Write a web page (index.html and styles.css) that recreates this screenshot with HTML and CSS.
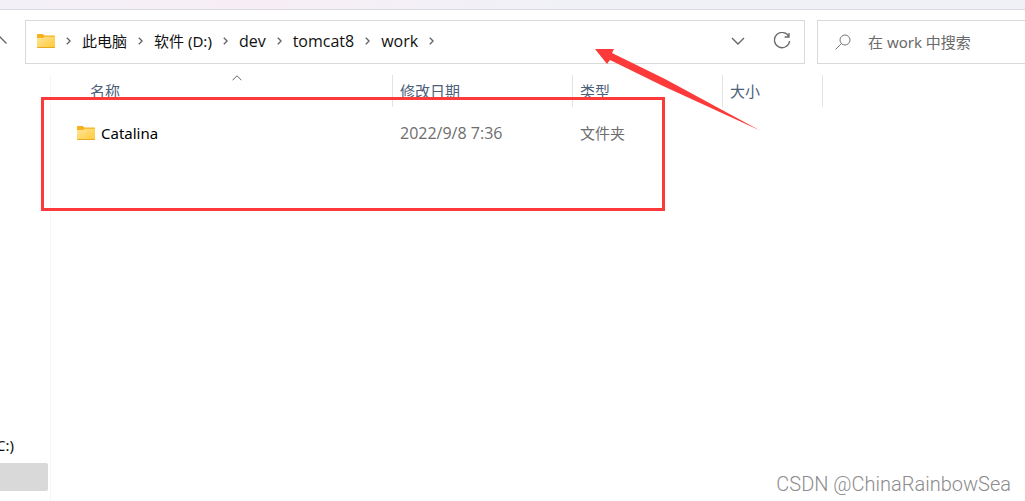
FILE: index.html
```
<!DOCTYPE html>
<html lang="zh-CN">
<head>
    <meta charset="UTF-8">
    <title>work</title>
    <link rel="stylesheet" href="styles.css">
</head>
<body>
<!-- shared icons -->
<svg class="defs" aria-hidden="true">
    <defs>
        <linearGradient id="folderFill" x1="0" y1="0" x2="1" y2="1">
            <stop offset="0" stop-color="#ffe69a"/>
            <stop offset="1" stop-color="#ffc937"/>
        </linearGradient>
    </defs>
    <symbol id="folder" viewBox="0 0 18 15">
        <path d="M0 .7Q0 0 .7 0H5.7L7.5 1.5H17.3Q18 1.5 18 2.2V8H0Z" fill="#f5b21d"/>
        <path d="M0 4H6L7.6 2.7H18V13.3Q18 14 17.3 14H.7Q0 14 0 13.3Z" fill="url(#folderFill)"/>
        <path d="M.3 13.5H17.7" stroke="#e8a820" fill="none"/>
    </symbol>
    <symbol id="chevron" viewBox="0 0 5 8">
        <path d="M.8.7L4.1 4L.8 7.3" fill="none" stroke="#666" stroke-width="1.4"/>
    </symbol>
</svg>

<div class="tabstrip"></div>

<header class="toolbar">
    <button class="up" aria-label="上移">
        <svg width="14" height="8" viewBox="0 0 14 8"><path d="M1 7L7 1L13.5 7.5" fill="none" stroke="#666" stroke-width="1.3"/></svg>
    </button>
    <div class="address">
        <nav class="crumbs">
            <svg class="folder"><use href="#folder"/></svg>
            <svg class="chevron"><use href="#chevron"/></svg>
            <a href="#">此电脑</a>
            <svg class="chevron"><use href="#chevron"/></svg>
            <a href="#">软件 (D:)</a>
            <svg class="chevron"><use href="#chevron"/></svg>
            <a class="latin" href="#">dev</a>
            <svg class="chevron"><use href="#chevron"/></svg>
            <a class="latin" href="#">tomcat8</a>
            <svg class="chevron"><use href="#chevron"/></svg>
            <a class="latin" href="#">work</a>
            <svg class="chevron"><use href="#chevron"/></svg>
        </nav>
        <button aria-label="历史记录">
            <svg width="14" height="8" viewBox="0 0 14 8"><path d="M1 1L7 7L13 1" fill="none" stroke="#666" stroke-width="1.4"/></svg>
        </button>
        <button aria-label="刷新">
            <svg width="18" height="18" viewBox="0 0 18 18"><path d="M16 5A7.6 7.6 0 1 0 16.6 9M16 1V5H11.6" fill="none" stroke="#6a6a6a" stroke-width="1.3"/></svg>
        </button>
    </div>
    <label class="search">
        <svg width="16" height="16" viewBox="0 0 16 16"><path d="M6.6 9.4L.6 15.4" stroke="#777"/><circle cx="10" cy="6" r="5" fill="none" stroke="#777"/></svg>
        <input type="search" placeholder="在 work 中搜索" aria-label="在 work 中搜索">
    </label>
</header>

<div class="content">
    <aside class="sidebar">
        <a class="drive" href="#">C:)</a>
        <div class="selected"></div>
    </aside>
    <main>
        <table class="files">
            <thead>
            <tr>
                <th class="name">
                    名称
                    <svg class="sort" width="10" height="6" viewBox="0 0 10 6"><path d="M.5 5.3L5 .8L9.5 5.3" fill="none" stroke="#666"/></svg>
                </th>
                <th class="date">修改日期</th>
                <th class="type">类型</th>
                <th class="size">大小</th>
                <th class="rest"></th>
            </tr>
            </thead>
            <tbody>
            <tr>
                <td class="name">
                    <div class="file"><svg class="folder"><use href="#folder"/></svg>Catalina</div>
                </td>
                <td class="latin">2022/9/8 7:36</td>
                <td>文件夹</td>
                <td></td>
                <td></td>
            </tr>
            </tbody>
        </table>
    </main>
</div>

<!-- annotations over the window -->
<div class="marker"></div>
<svg class="arrow" width="166" height="84" viewBox="0 0 166 84"><path d="M0 1L19 1L17 5L70 31L165 82.5L68 38L15 12L12 16Z" fill="#fc3a3a"/></svg>
<div class="watermark">CSDN @ChinaRainbowSea</div>
</body>
</html>
```

FILE: styles.css
```
* {
    box-sizing: border-box;
}

body {
    display: flex;
    flex-direction: column;
    position: relative;
    min-height: 100vh;
    margin: 0;
    overflow: hidden;
    background: #fff;
    color: #111;
    font: 15px/20px "Noto Sans", "Noto Sans CJK SC", sans-serif;
}

a {
    color: inherit;
    text-decoration: none;
}

button {
    display: flex;
    padding: 0;
    border: none;
    background: none;
}

svg {
    flex: none;
}

.latin {
    font-family: "Open Sans", sans-serif;
    font-size: 16px;
}

.defs {
    position: absolute;
    width: 0;
    height: 0;
}

.tabstrip {
    height: 10px;
    border-bottom: 1px solid #dcdbe2;
    background: linear-gradient(to right, #f3f0f7, #f7eef5 25%, #f0f1f7 55%);
}

.toolbar {
    display: flex;
    gap: 12px;
    padding-top: 10px;
}

.up {
    flex: none;
    align-items: center;
    justify-content: flex-end;
    width: 13px;
    padding: 0 6px 5px 0;
    overflow: hidden;
}

.address,
.search {
    display: flex;
    align-items: center;
    min-width: 0;
    height: 44px;
    border: 1px solid #d9d9d9;
}

.address {
    flex: 1 1 780px;
    gap: 28px;
    padding: 0 13px 2px 11px;
}

.crumbs {
    display: flex;
    flex: 1;
    align-items: center;
    gap: 11px;
    white-space: nowrap;
}

.folder {
    width: 18px;
    height: 15px;
}

.chevron {
    width: 5px;
    height: 8px;
}

.search {
    flex: 0 1 208px;
    gap: 17px;
    padding-left: 17px;
    border-right: none;
}

.search input {
    flex: 1;
    min-width: 0;
    padding: 0;
    border: none;
    outline: none;
    background: none;
    font: inherit;
}

.search input::placeholder {
    color: #6a6a6a;
}

.content {
    display: flex;
    flex: 1;
    padding-top: 11px;
}

.sidebar {
    display: flex;
    flex: none;
    flex-direction: column;
    justify-content: flex-end;
    width: 51px;
    padding: 0 2px 10px 0;
    border-right: 1px solid #f5f5f5;
}

.drive {
    display: flex;
    justify-content: flex-end;
    width: 14px;
    margin-bottom: 8px;
}

.selected {
    height: 28px;
    border-radius: 0 2px 2px 0;
    background: #d9d9d9;
}

main {
    flex: 1;
}

.files {
    width: 100%;
    border-collapse: separate;
    border-spacing: 0;
    table-layout: fixed;
    text-align: left;
}

.files th {
    position: relative;
    height: 32px;
    padding: 0 7px;
    border-right: 1px solid #e3e3e3;
    color: #4c607a;
    font-weight: normal;
}

.files th.name {
    width: 342px;
    padding-left: 39px;
}

.files th.date {
    width: 180px;
}

.files th.type {
    width: 150px;
}

.files th.size {
    width: 100px;
}

.files th.rest {
    border-right: none;
}

.sort {
    position: absolute;
    top: 0;
    left: 181px;
}

.files td {
    height: 52px;
    padding: 0 7px;
    color: #6d6d6d;
}

.files td.name {
    padding-left: 26px;
    color: #000;
}

.file {
    display: flex;
    align-items: center;
    gap: 6px;
}

.marker {
    position: absolute;
    top: 97px;
    left: 41px;
    width: 624px;
    height: 114px;
    border: 3px solid #fc3a3a;
}

.arrow {
    position: absolute;
    top: 48px;
    left: 595px;
}

.watermark {
    position: absolute;
    right: 14px;
    bottom: 5px;
    color: #8c8c8c;
    font: 300 20px/24px Roboto, sans-serif;
}
```
